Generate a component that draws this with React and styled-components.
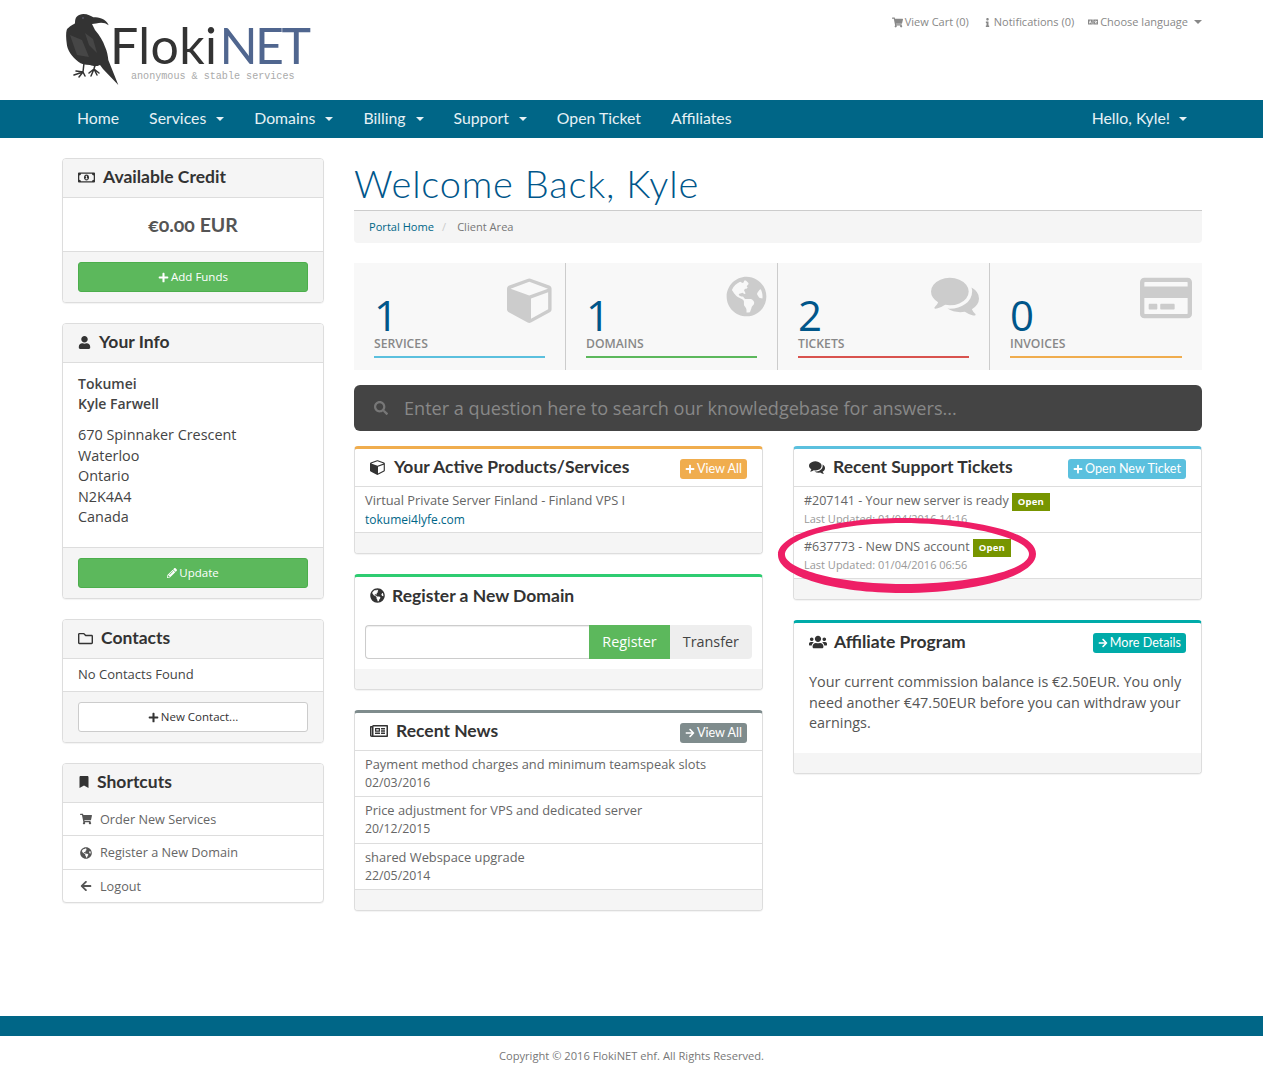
import React from 'react';
import styled, { createGlobalStyle } from 'styled-components';
import {
  FaShoppingCart, FaInfo, FaLanguage, FaGlobeAmericas, FaRegCreditCard, FaSearch,
  FaPlus, FaArrowRight, FaArrowLeft, FaUsers, FaRegMoneyBillAlt, FaUser, FaPencilAlt, FaRegFolder, FaBookmark, FaRegNewspaper,
} from 'react-icons/fa';

const Global = createGlobalStyle`
  html, body { margin: 0; padding: 0; background: #fff; }
  body { font-family: "Open Sans", "Liberation Sans", sans-serif; font-size: 13px; line-height: 1.42857; color: #555; }
  * { box-sizing: border-box; }
  svg { display: inline-block; }
`;
const HeadFont = `"Lato", "Open Sans", sans-serif`;

const Container = styled.div`width: 1140px; margin: 0 auto 0 62px;`;
const TopHeader = styled.header`height: 100px;`;
const TopInner = styled(Container)`display: flex; justify-content: space-between; align-items: flex-start; height: 100%;`;
const Logo = styled.div`display: flex; align-items: flex-start; padding: 13px 0 0 3px;`;
const LogoText = styled.div`display: flex; flex-direction: column; margin-left: -13px; padding-top: 6px;`;
const LogoName = styled.div`font-family: ${HeadFont}; font-size: 50px; line-height: 52px; font-weight: 400; color: #333; white-space: nowrap; letter-spacing: 0.4px;`;
const LogoNet = styled.span`color: #50668f; margin-left: 2px; letter-spacing: -2.5px;`;
const Tagline = styled.div`font-family: "Liberation Mono", monospace; font-size: 10.1px; line-height: 12px; color: #aaa; margin: 0 0 0 21px;`;
const TopLinks = styled.div`display: flex; gap: 14px; padding-top: 14px; font-size: 11px; line-height: 16px; color: #888;`;
const TopLink = styled.span`display: inline-flex; align-items: center; gap: 2px;`;
const Caret = styled.i`
  display: inline-block; width: 0; height: 0; margin-left: ${p => p.$ml || 4}px;
  border-top: 4px solid ${p => p.$c || '#888'}; border-left: 4px solid transparent; border-right: 4px solid transparent;
`;

const Nav = styled.nav`height: 38px; background: #006687;`;
const NavInner = styled(Container)`display: flex; justify-content: space-between; height: 100%;`;
const NavGroup = styled.div`display: flex;`;
const NavItem = styled.a`
  display: flex; align-items: center; height: 38px; padding: 0 15px 1px; color: #e6f1f5;
  font-family: ${HeadFont}; font-size: 15.8px; font-weight: 400; white-space: nowrap;
`;

const Content = styled(Container)`display: grid; grid-template-columns: 262px 848px; column-gap: 30px; padding-top: 20px; min-height: 878px; align-items: start;`;
const Column = styled.div`display: flex; flex-direction: column; gap: 20px; min-width: 0;`;

const Panel = styled.section`
  position: relative; background: #fff; border: 1px solid #ddd; border-radius: 4px; box-shadow: 0 1px 1px rgba(0,0,0,.05);
  ${p => p.$accent ? `border-top: 3px solid ${p.$accent};` : ''}
`;
const PanelHead = styled.div`
  display: flex; align-items: center; justify-content: space-between;
  height: ${p => p.$accent ? 38 : 39}px; padding: 0 15px ${p => p.$accent ? 1 : 1.5}px; background: ${p => p.$accent ? '#fff' : '#f5f5f5'};
  border-bottom: ${p => p.$plain ? 'none' : '1px solid #ddd'}; border-radius: 3px 3px 0 0;
`;
const PanelTitle = styled.h3`
  display: flex; align-items: center; gap: ${p => p.$gap || 8}px; margin: 0;
  font-family: ${HeadFont}; font-size: 17.5px; line-height: 20px; font-weight: 700; color: #333; white-space: nowrap;
`;
const PanelFoot = styled.div`
  padding: ${p => p.$empty ? '0' : '10px 15px'}; height: ${p => p.$empty ? (p.$noline ? '20px' : '21px') : 'auto'};
  background: #f5f5f5; border-top: ${p => p.$noline ? 'none' : '1px solid #ddd'}; border-radius: 0 0 3px 3px;
`;
const Amount = styled.div`height: 53px; display: flex; align-items: center; justify-content: center; font-family: ${HeadFont}; font-size: 19.5px; font-weight: 700; color: #555; font-variant-numeric: oldstyle-nums;`;
const FullBtn = styled.a`
  display: flex; align-items: center; justify-content: center; gap: 2px; height: 30px; border-radius: 3px; font-size: 11.5px;
  background: ${p => p.$light ? '#fff' : '#5cb85c'}; color: ${p => p.$light ? '#333' : '#fff'};
  border: 1px solid ${p => p.$light ? '#ccc' : '#4cae4c'};
`;
const InfoBody = styled.div`padding: 11px 15px 19.5px; font-size: 14.4px; line-height: 20.5px; color: #444;`;
const InfoStrong = styled.div`font-weight: 600; color: #444; font-size: 14px; line-height: 20px;`;
const InfoLines = styled.div`margin-top: 11px;`;
const SimpleBody = styled.div`height: 32px; padding: 0 15px 1px; display: flex; align-items: center; color: #444; font-size: 13px;`;
const ShortRow = styled.a`
  display: flex; align-items: center; height: ${p => p.$h}px; padding: 0 15px 0 17px; gap: 8px; color: #666; font-size: 12.7px;
  border-top: ${p => p.$first ? 'none' : '1px solid #ddd'};
  svg { width: 12px; color: #555; }
`;

const PageTitle = styled.h1`
  margin: 0; height: 53px; padding-top: 1px; font-family: ${HeadFont}; font-weight: 300; font-size: 38px; letter-spacing: 0.8px; line-height: 48px; color: #00568a; border-bottom: 1px solid #ccc; white-space: nowrap;
`;
const Crumbs = styled.div`display: flex; align-items: center; gap: 8px; height: 32px; padding: 0 15px; background: #f5f5f5; border-radius: 0 0 4px 4px; font-size: 11.1px; color: #777;`;
const CrumbLink = styled.a`color: #006687;`;
const CrumbSep = styled.span`color: #ccc; margin-right: 3px;`;
const Tiles = styled.div`display: grid; grid-template-columns: repeat(4, 212px); margin-top: 20px; height: 107px; background: #f8f8f8;`;
const Tile = styled.div`position: relative; padding: 24px 20px 0; border-right: ${p => p.$last ? 'none' : '1px solid #ccc'};`;
const TileNumber = styled.div`font-size: 42px; line-height: 42px; font-weight: 400; color: #00568a; margin-top: 7px; height: 42px;`;
const TileLabel = styled.div`font-size: 12.2px; line-height: 16px; font-weight: 600; color: #888; text-transform: uppercase; padding-bottom: 4px; border-bottom: 2px solid ${p => p.$c};`;
const TileIcon = styled.div`position: absolute; top: ${p => p.$top}px; right: ${p => p.$right}px; line-height: 0; color: #ccc;`;
const SearchBar = styled.div`display: flex; align-items: center; gap: 16px; height: 46px; margin-top: 15px; padding: 0 20px; background: #444; border-radius: 6px; color: #777;`;
const SearchInput = styled.input`
  flex: 1; border: 0; outline: 0; background: transparent; font: 18.1px "Open Sans", sans-serif; color: #888; padding: 0;
  &::placeholder { color: #888; opacity: 1; }
`;
const Cols = styled.div`display: grid; grid-template-columns: 409px 409px; column-gap: 30px; margin-top: 15px; align-items: start;`;
const Tag = styled.a`
  display: inline-flex; align-items: center; gap: 2px; height: 20px; margin-top: 3px; padding: 0 5px; border-radius: 3px; font-size: 12.6px;
  font-family: ${HeadFont}; background: ${p => p.$c}; color: #fff; white-space: nowrap;
`;
const ListRow = styled.div`
  padding: 4.4px 10px 0; height: ${p => p.$h || (p.$first ? 45 : 46)}px; font-size: 12.85px; line-height: 18.5px; color: #666; background: #fff;
  border-top: ${p => p.$first ? 'none' : '1px solid #ddd'};
`;
const SubLink = styled.a`display: block; margin-top: 1px; color: #006687; font-size: 12px;`;
const SubDate = styled.div`margin-top: 0.6px; color: #666; font-size: 12.3px;`;
const TicketDate = styled.div`color: #999; font-size: 11px;`;
const TicketTitle = styled.div`display: flex; align-items: center; gap: 3px; height: 19px; font-size: 12.5px;`;
const Status = styled.span`display: inline-flex; align-items: center; height: 18px; margin-top: 2px; padding: 0 6px; background: #779500; color: #fff; font-size: 9.5px; font-weight: 700; letter-spacing: .2px;`;
const DomainForm = styled.div`display: flex; height: 34px; margin: 10px 10px 10px;`;
const DomainInput = styled.input`flex: 1; min-width: 0; border: 1px solid #ccc; border-right: 0; border-radius: 4px 0 0 4px; box-shadow: inset 0 1px 1px rgba(0,0,0,.075); outline: 0;`;
const DomainBtn = styled.a`
  display: flex; align-items: center; padding: 0 13px; font-size: 14.4px; background: ${p => p.$green ? '#5cb85c' : '#eee'}; color: ${p => p.$green ? '#fff' : '#444'};
  border-radius: ${p => p.$green ? '0' : '0 4px 4px 0'};
`;
const AffText = styled.div`padding: 11px 15px 19.5px; font-size: 14.4px; line-height: 20.5px; color: #555;`;
const Annotation = styled.svg`position: absolute; left: -17px; top: 68px; width: 260px; height: 78px; pointer-events: none;`;

const FooterBar = styled.div`height: 20px; background: #006687;`;
const Copy = styled.div`height: 39px; display: flex; align-items: center; justify-content: center; font-size: 11.15px; color: #777;`;

const Crow = () => (
  <svg width="58" height="74" viewBox="0 0 58 74">
    <path fill="#333" d="M18.3 1 C23 1 26 3 28.3 4.3 C33 4.2 41 5.5 43.7 12.3 C40 9.5 36 9.2 31 10.5 L27 11 C28 13 29 15 30 17 C35 23 38 28 40 33.7 C42 38 43 43 43.3 47 L53.3 72 L38 56 L35 52 C31 54 28 53 25 52 C20 52 16 51 13.3 48.7 C7 44 2 37 1.7 30.3 C1 25 0.8 20 1.7 17 C3 14 8 12 10 10.3 C10 7 10.5 5 11.7 3.7 C13.5 2 16 1 18.3 1 Z" />
    <path fill="#555" opacity=".55" d="M5 22 L17 27 L24 44 L12 42 Z M20 20 L28 26 L32 40 L24 32 Z" />
    <circle cx="18" cy="5" r="1" fill="#556" />
    <path fill="none" stroke="#333" strokeWidth="1.5" strokeLinecap="round" d="M19 50 L18 59 M18 59 L11 58 M18 59 L9 62 M18 59 L14 64 M18 59 L20 63 M30 52 L29 56 M29 56 L24 60 M29 56 L26 63 M29 56 L32 62 M29 56 L34 60" />
  </svg>
);

const FA4 = ({ size, d, color }) => (
  <svg width={size} height={size} viewBox="0 0 1792 1792" fill={color || 'currentColor'} fillRule="evenodd"><path d={d} /></svg>
);
const CUBE = 'M896 1629l640-349v-636l-640 233v752zm-64-865l698-254-698-254-698 254zm832-252v768q0 35-18 65t-49 47l-704 384q-28 16-61 16t-61-16l-704-384q-31-17-49-47t-18-65v-768q0-40 23-73t61-47l704-256q22-8 44-8t44 8l704 256q38 14 61 47t23 73z';
const COMMENTS = 'M1408 768q0 139-94 257t-256.5 186.5-353.5 68.5q-86 0-176-16-124 88-278 128-36 9-86 16h-3q-11 0-20.5-8t-11.5-21q-1-3-1-6.5t.5-6.5 2-6l2.5-5 3.5-5.5 4-5 4.5-5 4-4.5q5-6 23-25t26-29.5 22.5-29 25-38.5 20.5-44q-124-72-195-177t-71-224q0-139 94-257t256.5-186.5 353.5-68.5 353.5 68.5 256.5 186.5 94 257zm384 256q0 120-71 224.5t-195 176.5q10 24 20.5 44t25 38.5 22.5 29 26 29.5 23 25q1 1 4 4.5t4.5 5 4 5 3.5 5.5l2.5 5 2 6 .5 6.5-1 6.5q-3 14-13 22t-22 7q-50-7-86-16-154-40-278-128-90 16-176 16-271 0-472-132 58 4 88 4 161 0 309-45t264-129q125-92 192-212t67-254q0-77-23-152 129 71 204 178t75 230z';

export default function App() {
  return (
    <>
      <Global />
      <TopHeader>
        <TopInner>
          <Logo>
            <Crow />
            <LogoText>
              <LogoName>Floki<LogoNet>NET</LogoNet></LogoName>
              <Tagline>anonymous &amp; stable services</Tagline>
            </LogoText>
          </Logo>
          <TopLinks>
            <TopLink><FaShoppingCart size={11} /> View Cart (0)</TopLink>
            <TopLink><FaInfo size={9} /> Notifications (0)</TopLink>
            <TopLink><FaLanguage size={10} /> Choose language <Caret /></TopLink>
          </TopLinks>
        </TopInner>
      </TopHeader>
      <Nav>
        <NavInner>
          <NavGroup>
            <NavItem>Home</NavItem>
            <NavItem>Services<Caret $c="#e6f1f5" $ml={10} /></NavItem>
            <NavItem>Domains<Caret $c="#e6f1f5" $ml={10} /></NavItem>
            <NavItem>Billing<Caret $c="#e6f1f5" $ml={10} /></NavItem>
            <NavItem>Support<Caret $c="#e6f1f5" $ml={10} /></NavItem>
            <NavItem>Open Ticket</NavItem>
            <NavItem>Affiliates</NavItem>
          </NavGroup>
          <NavItem>Hello, Kyle!<Caret $c="#e6f1f5" $ml={9} /></NavItem>
        </NavInner>
      </Nav>
      <Content>
        <Column>
          <Panel>
            <PanelHead><PanelTitle><FaRegMoneyBillAlt size={17} />Available Credit</PanelTitle></PanelHead>
            <Amount>€0.00 EUR</Amount>
            <PanelFoot><FullBtn><FaPlus size={11} /> Add Funds</FullBtn></PanelFoot>
          </Panel>
          <Panel>
            <PanelHead><PanelTitle><FaUser size={13} />Your Info</PanelTitle></PanelHead>
            <InfoBody>
              <InfoStrong>Tokumei</InfoStrong>
              <InfoStrong>Kyle Farwell</InfoStrong>
              <InfoLines>
                670 Spinnaker Crescent<br />Waterloo<br />Ontario<br />N2K4A4<br />Canada
              </InfoLines>
            </InfoBody>
            <PanelFoot><FullBtn><FaPencilAlt size={10} /> Update</FullBtn></PanelFoot>
          </Panel>
          <Panel>
            <PanelHead><PanelTitle><FaRegFolder size={15} />Contacts</PanelTitle></PanelHead>
            <SimpleBody>No Contacts Found</SimpleBody>
            <PanelFoot><FullBtn $light><FaPlus size={11} /> New Contact...</FullBtn></PanelFoot>
          </Panel>
          <Panel>
            <PanelHead><PanelTitle $gap={7}><FaBookmark size={12} />Shortcuts</PanelTitle></PanelHead>
            <ShortRow $first $h={32}><FaShoppingCart size={12} />Order New Services</ShortRow>
            <ShortRow $h={34}><FaGlobeAmericas size={12} />Register a New Domain</ShortRow>
            <ShortRow $h={33}><FaArrowLeft size={12} />Logout</ShortRow>
          </Panel>
        </Column>
        <div>
          <PageTitle>Welcome Back, Kyle</PageTitle>
          <Crumbs><CrumbLink>Portal Home</CrumbLink><CrumbSep>/</CrumbSep><span>Client Area</span></Crumbs>
          <Tiles>
            <Tile>
              <TileNumber>1</TileNumber><TileLabel $c="#5bc0de">Services</TileLabel>
              <TileIcon $top={12} $right={10}><FA4 size={48} d={CUBE} /></TileIcon>
            </Tile>
            <Tile>
              <TileNumber>1</TileNumber><TileLabel $c="#5cb85c">Domains</TileLabel>
              <TileIcon $top={13} $right={10}><FaGlobeAmericas size={41} /></TileIcon>
            </Tile>
            <Tile>
              <TileNumber>2</TileNumber><TileLabel $c="#d9534f">Tickets</TileLabel>
              <TileIcon $top={8} $right={10}><FA4 size={48} d={COMMENTS} /></TileIcon>
            </Tile>
            <Tile $last>
              <TileNumber>0</TileNumber><TileLabel $c="#f0ad4e">Invoices</TileLabel>
              <TileIcon $top={9} $right={10}><FaRegCreditCard size={52} /></TileIcon>
            </Tile>
          </Tiles>
          <SearchBar>
            <FaSearch size={14} />
            <SearchInput placeholder="Enter a question here to search our knowledgebase for answers..." />
          </SearchBar>
          <Cols>
            <Column>
              <Panel $accent="#f0ad4e">
                <PanelHead $accent><PanelTitle $gap={8}><FA4 size={16} d={CUBE} />Your Active Products/Services</PanelTitle><Tag $c="#f0ad4e"><FaPlus size={10} /> View All</Tag></PanelHead>
                <ListRow $first>Virtual Private Server Finland - Finland VPS I<SubLink>tokumei4lyfe.com</SubLink></ListRow>
                <PanelFoot $empty />
              </Panel>
              <Panel $accent="#2ecc71">
                <PanelHead $accent $plain><PanelTitle $gap={7}><FaGlobeAmericas size={15} />Register a New Domain</PanelTitle></PanelHead>
                <DomainForm>
                  <DomainInput />
                  <DomainBtn $green>Register</DomainBtn>
                  <DomainBtn>Transfer</DomainBtn>
                </DomainForm>
                <PanelFoot $empty $noline />
              </Panel>
              <Panel $accent="#7f8c8d">
                <PanelHead $accent><PanelTitle $gap={8}><FaRegNewspaper size={18} />Recent News</PanelTitle><Tag $c="#7f8c8d"><FaArrowRight size={10} /> View All</Tag></PanelHead>
                <ListRow $first>Payment method charges and minimum teamspeak slots<SubDate>02/03/2016</SubDate></ListRow>
                <ListRow $h={47}>Price adjustment for VPS and dedicated server<SubDate>20/12/2015</SubDate></ListRow>
                <ListRow>shared Webspace upgrade<SubDate>22/05/2014</SubDate></ListRow>
                <PanelFoot $empty />
              </Panel>
            </Column>
            <Column>
              <Panel $accent="#5bc0de">
                <PanelHead $accent><PanelTitle $gap={8}><FA4 size={16} d={COMMENTS} />Recent Support Tickets</PanelTitle><Tag $c="#5bc0de"><FaPlus size={10} /> Open New Ticket</Tag></PanelHead>
                <ListRow $first><TicketTitle>#207141 - Your new server is ready <Status>Open</Status></TicketTitle><TicketDate>Last Updated: 01/04/2016 14:16</TicketDate></ListRow>
                <ListRow><TicketTitle>#637773 - New DNS account <Status>Open</Status></TicketTitle><TicketDate>Last Updated: 01/04/2016 06:56</TicketDate></ListRow>
                <PanelFoot $empty />
                <Annotation viewBox="0 0 260 78">
                  <path fill="#ee1f66" fillRule="evenodd" d="M1 38 C1 16 60 1 125 1 C195 1 259 14 259 37 C259 60 195 76 125 76 C60 76 1 60 1 38 Z M8 38 C9 52 62 67 125 67 C190 67 252 54 252 37 C252 21 190 6 125 6 C62 6 8 21 8 38 Z" />
                </Annotation>
              </Panel>
              <Panel $accent="#00aba9">
                <PanelHead $accent $plain><PanelTitle $gap={7}><FaUsers size={18} />Affiliate Program</PanelTitle><Tag $c="#00aba9"><FaArrowRight size={10} /> More Details</Tag></PanelHead>
                <AffText>Your current commission balance is €2.50EUR. You only need another €47.50EUR before you can withdraw your earnings.</AffText>
                <PanelFoot $empty $noline />
              </Panel>
            </Column>
          </Cols>
        </div>
      </Content>
      <FooterBar />
      <Copy>Copyright © 2016 FlokiNET ehf. All Rights Reserved.</Copy>
    </>
  );
}
